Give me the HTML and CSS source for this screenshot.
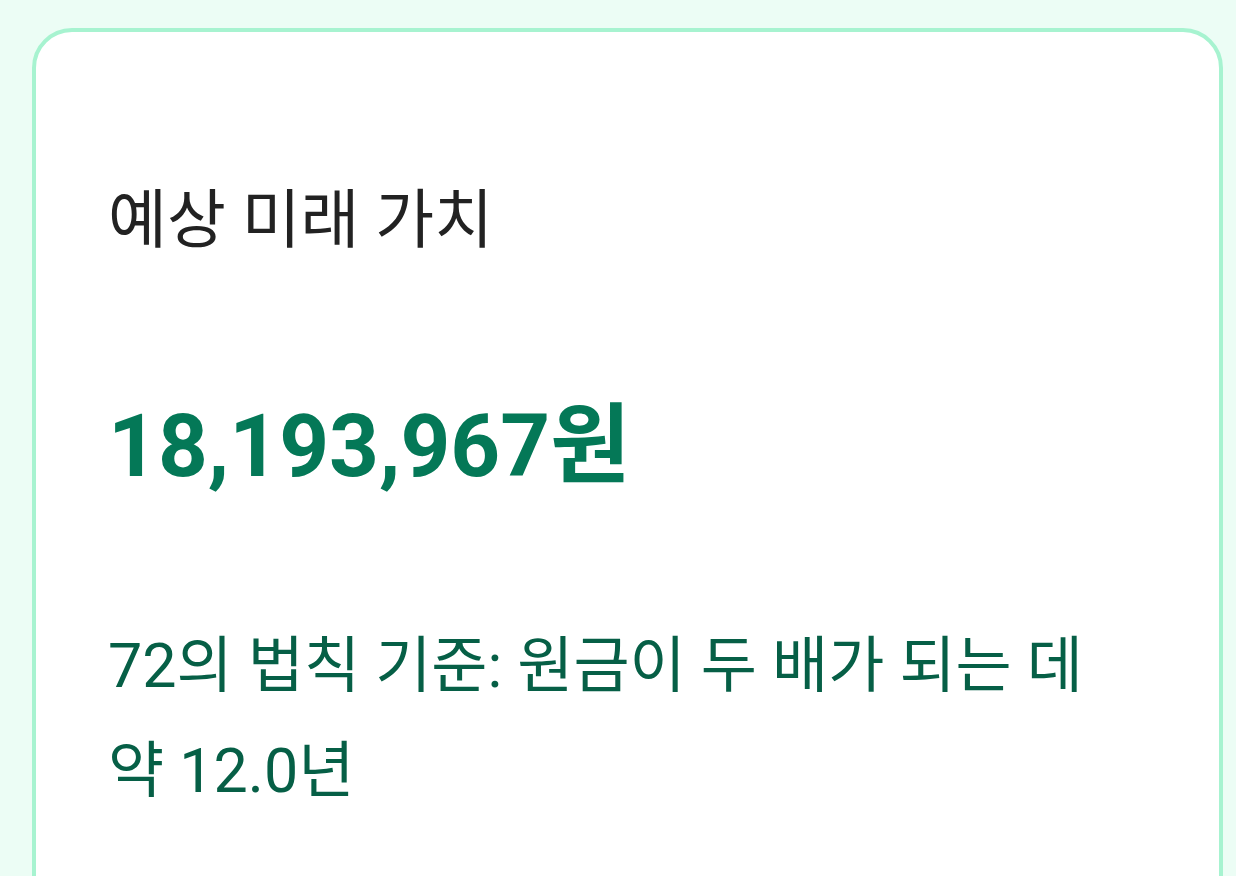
FILE: index.html
```html
<!DOCTYPE html>
<html lang="ko">
<head>
    <meta charset="UTF-8">
    <meta name="viewport" content="width=device-width, initial-scale=1.0">
    <title>복리 계산기</title>
    <link rel="stylesheet" href="styles.css">
</head>
<body>
    <div class="result-card">
        <h2 class="result-label">예상 미래 가치</h2>
        <p class="result-value">18,193,967원</p>
        <p class="result-note">72의 법칙 기준: 원금이 두 배가 되는 데 약 12.0년</p>
    </div>
</body>
</html>
```

FILE: styles.css
```css
body {
    margin: 0;
    padding: 28px 13px 0 32px;
    background-color: #ecfdf5;
    font-family: Roboto, "Noto Sans CJK KR", sans-serif;
}

.result-card {
    box-sizing: border-box;
    min-height: 900px;
    background-color: #fff;
    border: 4px solid #a7f3d0;
    border-radius: 40px;
    padding: 141px 72px 0 72px;
}

.result-label {
    margin: 0;
    font-size: 64px;
    font-weight: 400;
    line-height: 96px;
    color: #222;
}

.result-value {
    margin: 125px 0 0;
    font-size: 87px;
    font-weight: 700;
    line-height: 1.2;
    color: #047857;
}

.result-note {
    margin: 116px 0 0;
    font-size: 61px;
    line-height: 105px;
    color: #065f46;
}
```
